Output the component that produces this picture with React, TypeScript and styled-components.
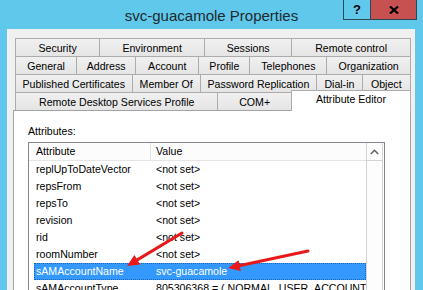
import React from 'react';
import styled, { createGlobalStyle } from 'styled-components';

const Global = createGlobalStyle`
  html, body { margin: 0; padding: 0; }
  body {
    width: 423px; height: 290px; overflow: hidden;
    background: #60c8ea;
    font-family: "Liberation Sans", Arial, sans-serif;
  }
`;

const Window = styled.div`
  position: relative;
  width: 423px;
  height: 290px;
  overflow: hidden;
  display: flex;
  flex-direction: column;
  background: #60c8ea;
`;

const TitleBar = styled.div`
  flex: 0 0 29px;
  display: grid;
  grid-template-columns: 1fr auto 1fr;
  align-items: start;
`;

const Title = styled.div`
  grid-column: 2;
  font-size: 15px;
  line-height: 15px;
  padding-top: 8px;
  color: #1d2a31;
  white-space: nowrap;
`;

const Caption = styled.div`
  grid-column: 3;
  justify-self: end;
  display: flex;
  margin-right: 6px;
`;

const CapButton = styled.div<{ $close?: boolean; $w: number }>`
  width: ${p => p.$w}px;
  height: 20px;
  box-sizing: border-box;
  border: 1px solid #2c4854;
  border-top: none;
  background: ${p => (p.$close ? '#c75050' : 'transparent')};
  display: flex;
  align-items: center;
  justify-content: center;
  font-weight: bold;
  font-size: 13px;
  color: #000;
  & + & { border-left: none; }
`;

const Panel = styled.div`
  flex: 1;
  margin: 0 8px 0 7px;
  background: #f0f0f0;
  padding: 9px 4px 0 6px;
  display: flex;
  flex-direction: column;
  min-height: 0;
`;

const TabRows = styled.div`
  display: flex;
  flex-direction: column;
  padding-left: 2px;
`;

const TabRow = styled.div`
  display: flex;
  height: 18px;
`;

const Tab = styled.div<{ $w: number; $active?: boolean; $last?: boolean }>`
  flex: ${p => p.$w} 1 0;
  box-sizing: border-box;
  height: ${p => (p.$active ? 21 : 18)}px;
  margin-top: ${p => (p.$active ? -2 : 0)}px;
  position: relative;
  z-index: ${p => (p.$active ? 2 : 1)};
  border-top: 1px solid #acacac;
  border-left: 1px solid #acacac;
  border-right: ${p => (p.$last ? '1px solid #acacac' : 'none')};
  background: ${p => (p.$active ? '#ffffff' : 'linear-gradient(#f0f0f0, #e5e5e5)')};
  font-size: 10.6px;
  line-height: ${p => (p.$active ? 17 : 18)}px;
  text-align: center;
  color: #000;
  white-space: nowrap;
`;

const Page = styled.div`
  flex: 1;
  background: #ffffff;
  border: 1px solid #a3a3a3;
  border-bottom: none;
  padding: 14px 0 0 14px;
  display: flex;
  flex-direction: column;
  min-height: 0;
`;

const Label = styled.div`
  font-size: 10.6px;
  line-height: 13px;
  margin-bottom: 4px;
  color: #000;
`;

const List = styled.div`
  width: 357px;
  height: 200px;
  box-sizing: border-box;
  border: 1px solid #828790;
  display: flex;
  background: #fff;
`;

const ListBody = styled.div`
  flex: 1;
  display: flex;
  flex-direction: column;
  min-width: 0;
`;

const Header = styled.div`
  height: 18px;
  box-sizing: border-box;
  display: grid;
  grid-template-columns: 122px 1fr;
  border-bottom: 1px solid #e5e5e5;
  background: #fcfcfc;
`;

const HeaderCell = styled.div<{ $pad: number; $divider?: boolean }>`
  padding-left: ${p => p.$pad}px;
  box-sizing: border-box;
  border-right: ${p => (p.$divider ? '1px solid #e5e5e5' : 'none')};
  font-size: 10.6px;
  line-height: 17px;
  color: #000;
`;

const Rows = styled.div`
  display: flex;
  flex-direction: column;
  margin-left: 5px;
`;

const Row = styled.div<{ $selected?: boolean }>`
  height: 17px;
  display: grid;
  grid-template-columns: 117px 1fr;
  background: ${p => (p.$selected ? '#3399ff' : 'transparent')};
  color: ${p => (p.$selected ? '#ffffff' : '#000000')};
  outline: ${p => (p.$selected ? '1px dotted rgba(20,60,110,0.55)' : 'none')};
  outline-offset: -1px;
  font-size: 10.6px;
  line-height: 17px;
  white-space: nowrap;
`;

const Cell = styled.div<{ $pad: number }>`
  padding-left: ${p => p.$pad}px;
  overflow: hidden;
`;

const ScrollBar = styled.div`
  width: 17px;
  box-sizing: border-box;
  margin-right: 1px;
  border-left: 1px solid #d4d4d4;
  border-right: 1px solid #d4d4d4;
  background: #fdfdfd;
  display: flex;
  flex-direction: column;
`;

const ScrollUp = styled.div`
  height: 18px;
  box-sizing: border-box;
  border-bottom: 1px solid #d4d4d4;
  display: flex;
  align-items: center;
  justify-content: center;
`;

const Overlay = styled.svg`
  position: absolute;
  left: 0;
  top: 0;
  pointer-events: none;
  z-index: 5;
`;

type TabDef = { label: string; w: number; active?: boolean };

const tabRows: TabDef[][] = [
  [
    { label: 'Security', w: 84 },
    { label: 'Environment', w: 105 },
    { label: 'Sessions', w: 87 },
    { label: 'Remote control', w: 119 },
  ],
  [
    { label: 'General', w: 61 },
    { label: 'Address', w: 59 },
    { label: 'Account', w: 63 },
    { label: 'Profile', w: 51 },
    { label: 'Telephones', w: 77 },
    { label: 'Organization', w: 84 },
  ],
  [
    { label: 'Published Certificates', w: 117 },
    { label: 'Member Of', w: 68 },
    { label: 'Password Replication', w: 117 },
    { label: 'Dial-in', w: 45 },
    { label: 'Object', w: 48 },
  ],
  [
    { label: 'Remote Desktop Services Profile', w: 203 },
    { label: 'COM+', w: 73 },
    { label: 'Attribute Editor', w: 119, active: true },
  ],
];

const attrs: { name: string; value: string; selected?: boolean }[] = [
  { name: 'replUpToDateVector', value: '<not set>' },
  { name: 'repsFrom', value: '<not set>' },
  { name: 'repsTo', value: '<not set>' },
  { name: 'revision', value: '<not set>' },
  { name: 'rid', value: '<not set>' },
  { name: 'roomNumber', value: '<not set>' },
  { name: 'sAMAccountName', value: 'svc-guacamole', selected: true },
  { name: 'sAMAccountType', value: '805306368 = ( NORMAL_USER_ACCOUNT )' },
];

const Arrow = ({ x1, y1, x2, y2 }: { x1: number; y1: number; x2: number; y2: number }) => {
  const dx = x2 - x1;
  const dy = y2 - y1;
  const len = Math.hypot(dx, dy);
  const ux = dx / len;
  const uy = dy / len;
  const hl = 12;
  const hw = 5.5;
  const bx = x2 - ux * hl;
  const by = y2 - uy * hl;
  const px = -uy;
  const py = ux;
  const pts = `${x2},${y2} ${bx + px * hw},${by + py * hw} ${bx - px * hw},${by - py * hw}`;
  return (
    <g>
      <line x1={x1} y1={y1} x2={bx + ux * 2} y2={by + uy * 2} stroke="#e8191b" strokeWidth={3} strokeLinecap="round" />
      <polygon points={pts} fill="#e8191b" />
    </g>
  );
};

export default function App() {
  return (
    <>
      <Global />
      <Window>
        <TitleBar>
          <Title>svc-guacamole Properties</Title>
          <Caption>
            <CapButton $w={28}>?</CapButton>
            <CapButton $w={46} $close>
              <svg width="10" height="8" viewBox="0 0 10 8">
                <path d="M1 0.5 L9 7.5 M9 0.5 L1 7.5" stroke="#000" strokeWidth="2.2" />
              </svg>
            </CapButton>
          </Caption>
        </TitleBar>
        <Panel>
          <TabRows>
            {tabRows.map((row, ri) => (
              <TabRow key={ri}>
                {row.map((t, i) => (
                  <Tab key={t.label} $w={t.w} $active={t.active} $last={i === row.length - 1}>
                    {t.label}
                  </Tab>
                ))}
              </TabRow>
            ))}
          </TabRows>
          <Page>
            <Label>Attributes:</Label>
            <List>
              <ListBody>
                <Header>
                  <HeaderCell $pad={7} $divider>Attribute</HeaderCell>
                  <HeaderCell $pad={5}>Value</HeaderCell>
                </Header>
                <Rows>
                  {attrs.map(a => (
                    <Row key={a.name} $selected={a.selected}>
                      <Cell $pad={2}>{a.name}</Cell>
                      <Cell $pad={5}>{a.value}</Cell>
                    </Row>
                  ))}
                </Rows>
              </ListBody>
              <ScrollBar>
                <ScrollUp>
                  <svg width="9" height="6" viewBox="0 0 9 6">
                    <path d="M0.8 5 L4.5 1.3 L8.2 5" stroke="#606060" strokeWidth="1.4" fill="none" />
                  </svg>
                </ScrollUp>
              </ScrollBar>
            </List>
          </Page>
        </Panel>
        <Overlay width="423" height="290" viewBox="0 0 423 290">
          <Arrow x1={182} y1={233} x2={127} y2={266} />
          <Arrow x1={308} y1={251} x2={228} y2={268} />
        </Overlay>
      </Window>
    </>
  );
}
